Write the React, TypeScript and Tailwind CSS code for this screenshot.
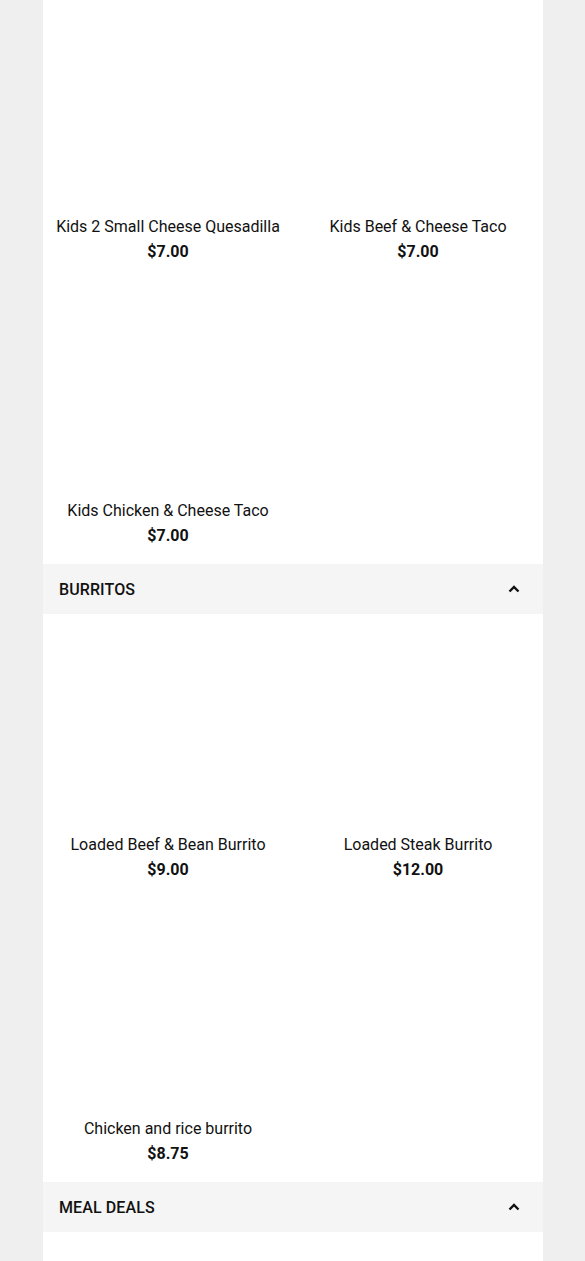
import React from 'react';

type Item = { name: string; price: string };

const sections: { title?: string; items: Item[] }[] = [
  {
    items: [
      { name: 'Kids 2 Small Cheese Quesadilla', price: '$7.00' },
      { name: 'Kids Beef & Cheese Taco', price: '$7.00' },
      { name: 'Kids Chicken & Cheese Taco', price: '$7.00' },
    ],
  },
  {
    title: 'BURRITOS',
    items: [
      { name: 'Loaded Beef & Bean Burrito', price: '$9.00' },
      { name: 'Loaded Steak Burrito', price: '$12.00' },
      { name: 'Chicken and rice burrito', price: '$8.75' },
    ],
  },
  { title: 'MEAL DEALS', items: [] },
];

function ChevronUp() {
  return (
    <svg width="20" height="20" viewBox="0 0 20 20" fill="none">
      <path d="M5.5 12.5L10 8l4.5 4.5" stroke="#111" strokeWidth="2.4" />
    </svg>
  );
}

function MenuItem({ item }: { item: Item }) {
  return (
    <div className="h-[284px] flex flex-col items-center">
      {/* image placeholder, empty in the shot */}
      <div className="h-[219px] w-full" />
      <div className="text-[16px] leading-6 text-[#111] text-center">{item.name}</div>
      <div className="text-[16px] leading-6 mt-px font-bold text-[#111]">{item.price}</div>
    </div>
  );
}

function SectionHeader({ title }: { title: string }) {
  return (
    <div className="h-[50px] bg-[#f5f5f5] flex items-center justify-between pl-4 pr-[19px]">
      <span className="text-[16px] leading-6 pt-px font-medium text-[#111] tracking-[0.1px]">{title}</span>
      <ChevronUp />
    </div>
  );
}

export default function App() {
  return (
    <div
      className="min-h-screen bg-[#efefef] overflow-hidden"
      style={{ fontFamily: 'Roboto, "Liberation Sans", sans-serif' }}
    >
      <div className="w-[500px] ml-[43px] bg-white -mt-[4px] min-h-[1265px]">
        {sections.map((s, i) => (
          <div key={i}>
            {s.title && <SectionHeader title={s.title} />}
            {s.items.length > 0 && (
              <div className="grid grid-cols-2">
                {s.items.map(item => (
                  <MenuItem key={item.name} item={item} />
                ))}
              </div>
            )}
          </div>
        ))}
      </div>
    </div>
  );
}
